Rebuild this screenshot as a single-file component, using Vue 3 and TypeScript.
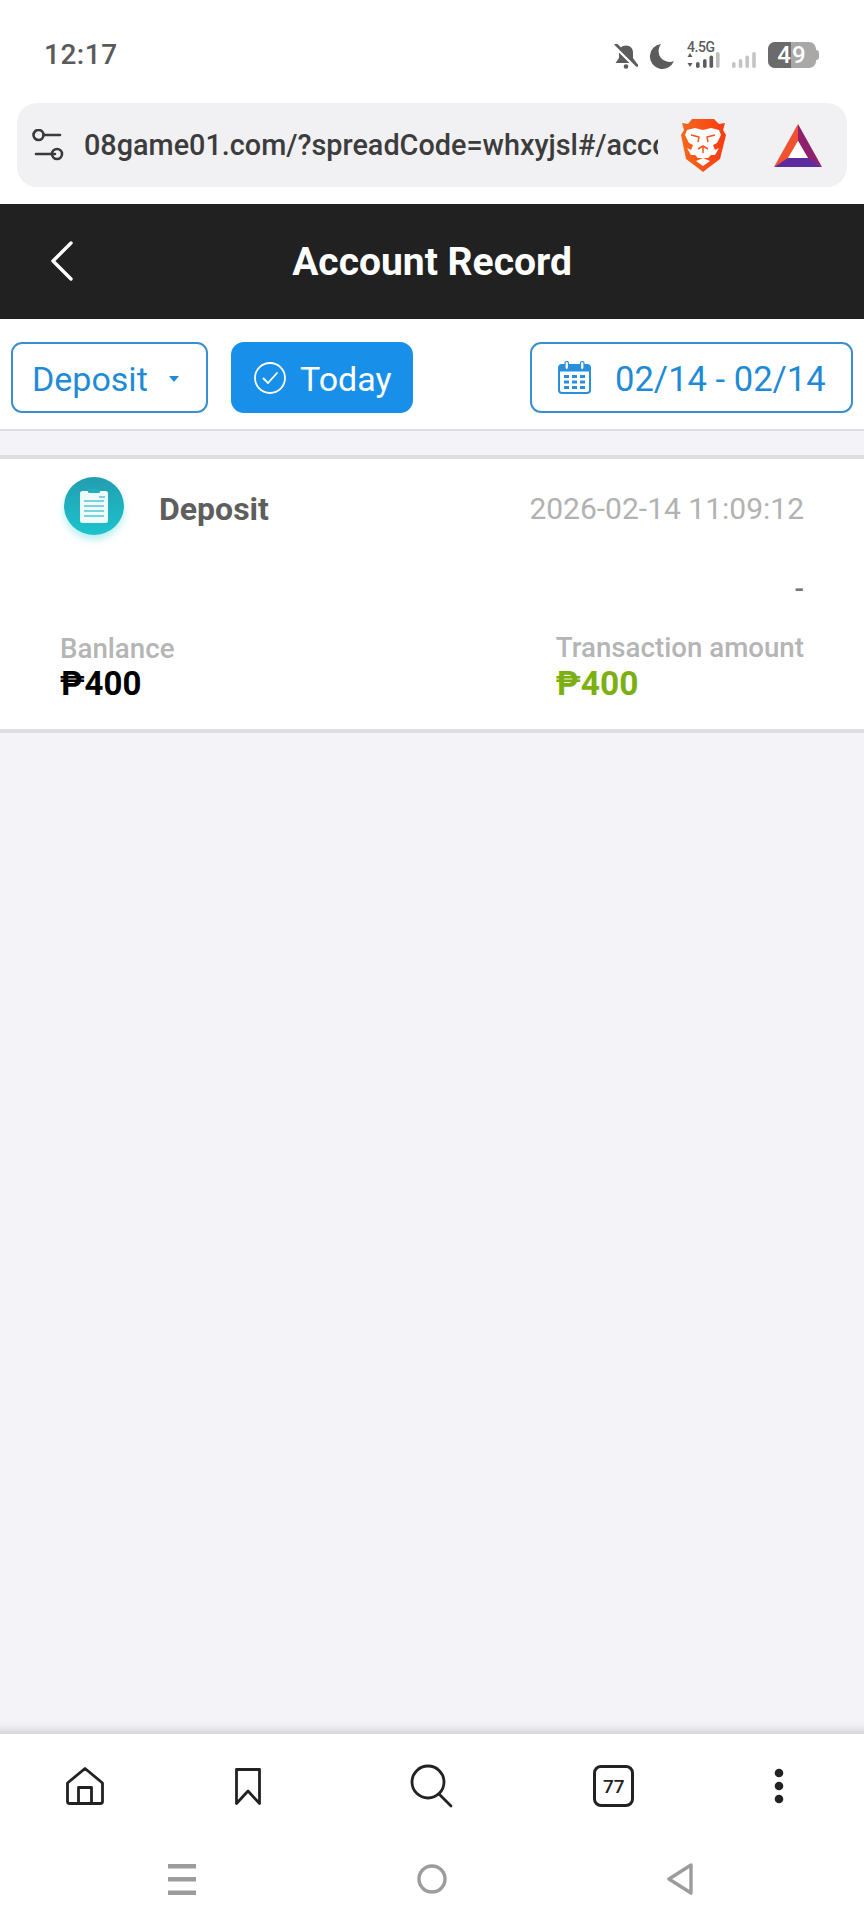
<script setup lang="ts">
const url: string = '08game01.com/?spreadCode=whxyjsl#/account'
</script>

<template>
  <div class="page">
    <div class="status">
      <span class="time">12:17</span>
      <div class="status-icons">
        <svg class="bell" width="24" height="25" viewBox="0 0 24 25">
          <path d="M12 1.500c-4.500 0-7 3-7 7v5.500L1.500 19h21L19 14V8.500c0-4-2.500-7-7-7z" fill="#5c5c5c" />
          <circle cx="12" cy="22.500" r="2.300" fill="#5c5c5c" />
          <path d="M2 2.500l20 20" stroke="#fff" stroke-width="4.500" />
          <path d="M2 0.500l21 21" stroke="#5c5c5c" stroke-width="2.800" stroke-linecap="round" />
        </svg>
        <svg class="moon" width="25" height="25" viewBox="0 0 25 25">
          <path d="M12 0A12.500 12.500 0 1 0 25 17 A11 11 0 0 1 12 0z" fill="#5c5c5c" />
        </svg>
        <div class="net">
          <span class="net-label">4.5G</span>
          <svg width="33" height="16" viewBox="0 0 33 16">
            <path d="M3 1L0.500 5h5zM3 15L0.500 11h5z" fill="#5c5c5c" />
            <rect x="9" y="10" width="3.600" height="6" rx="1.800" fill="#5c5c5c" />
            <rect x="16" y="7" width="3.600" height="9" rx="1.800" fill="#5c5c5c" />
            <rect x="22.500" y="3.500" width="3.600" height="12.500" rx="1.800" fill="#5c5c5c" />
            <rect x="29" y="0" width="3.600" height="16" rx="1.800" fill="#bdbdbd" />
          </svg>
        </div>
        <svg class="signal" width="24" height="16" viewBox="0 0 24 16">
          <rect x="0" y="10" width="3.600" height="6" rx="1.800" fill="#c4c4c4" />
          <rect x="6.700" y="7" width="3.600" height="9" rx="1.800" fill="#c4c4c4" />
          <rect x="13.400" y="3.500" width="3.600" height="12.500" rx="1.800" fill="#c4c4c4" />
          <rect x="20.200" y="0" width="3.600" height="16" rx="1.800" fill="#c4c4c4" />
        </svg>
        <div class="battery">
          <span class="battery-fill"></span>
          <span class="battery-num">49</span>
          <span class="battery-tip"></span>
        </div>
      </div>
    </div>

    <div class="urlbar">
      <svg class="sliders" width="32" height="32" viewBox="0 0 32 32" fill="none" stroke="#3a3a3a" stroke-width="2.600">
        <circle cx="6.500" cy="6" r="5" />
        <path d="M11.500 6H28M4 25h19" stroke-linecap="round" />
        <circle cx="25" cy="25" r="5" />
      </svg>
      <span class="url">{{ url }}</span>
      <svg class="brave" width="46" height="54" viewBox="0 0 46 54">
        <defs>
          <linearGradient id="braveGrad" x1="0" y1="0" x2="1" y2="0">
            <stop offset="0" stop-color="#f26a1c" />
            <stop offset="1" stop-color="#fb3a13" />
          </linearGradient>
        </defs>
        <path d="M12 1h22l5 5 6-1-2 7 3 5-6 24-12 9-5 4-5-4-12-9L1 17l3-5-2-7 6 1z" fill="url(#braveGrad)" />
        <path d="M7 12l8-2 8 2 8-2 8 2 2 5-4 8-4 2 2 5 4-2-4 7h-4l-3 3h-10l-3-3h-4l-4-7 4 2 2-5-4-2-4-8z" fill="#fff" />
        <path d="M11 17l8 2-1 5M35 17l-8 2 1 5M18 31l5-3 5 3M23 28v7" fill="none" stroke="#f4531a" stroke-width="1.500" stroke-linejoin="round" />
        <path d="M16 43l7-3 7 3-7 5z" fill="#fff" />
      </svg>
      <svg class="bat" width="48" height="43" viewBox="0 0 48 43">
        <path d="M24 0L0 43l14-8L24 17z" fill="#f0512f" />
        <path d="M24 0l24 43-14-8L24 17z" fill="#90206d" />
        <path d="M0 43h48l-14-9H14z" fill="#5d2b9e" />
        <path d="M24 17l10 17H14z" fill="#fff" />
      </svg>
    </div>

    <header class="topbar">
      <svg class="back" width="24" height="40" viewBox="0 0 24 40" fill="none" stroke="#fff" stroke-width="3.400" stroke-linecap="round" stroke-linejoin="round">
        <path d="M21 2L3 20l18 18" />
      </svg>
      <h1 class="title">Account Record</h1>
    </header>

    <div class="filters">
      <div class="chip chip-type">
        <span>Deposit</span>
        <span class="caret"></span>
      </div>
      <div class="chip chip-today">
        <svg width="32" height="32" viewBox="0 0 32 32" fill="none" stroke="#fff" stroke-width="1.800">
          <circle cx="16" cy="16" r="15" />
          <path d="M9.500 16.500l4.500 4.500 9-10" stroke-linecap="round" stroke-linejoin="round" />
        </svg>
        <span>Today</span>
      </div>
      <div class="chip chip-date">
        <svg width="33" height="33" viewBox="0 0 33 33">
          <rect x="1" y="4" width="31" height="28" rx="3" fill="none" stroke="#2a8fdb" stroke-width="2" />
          <path d="M1 10V7a3 3 0 0 1 3-3h25a3 3 0 0 1 3 3v3z" fill="#2a8fdb" stroke="#2a8fdb" stroke-width="1" />
          <rect x="7" y="0.500" width="3.500" height="8" rx="1.700" fill="#fff" stroke="#2a8fdb" stroke-width="1.200" />
          <rect x="22.500" y="0.500" width="3.500" height="8" rx="1.700" fill="#fff" stroke="#2a8fdb" stroke-width="1.200" />
          <g fill="#2a8fdb">
            <rect x="6" y="14" width="5" height="3" />
            <rect x="14" y="14" width="5" height="3" />
            <rect x="22" y="14" width="5" height="3" />
            <rect x="6" y="19.500" width="5" height="3" />
            <rect x="14" y="19.500" width="5" height="3" />
            <rect x="22" y="19.500" width="5" height="3" />
            <rect x="6" y="25" width="5" height="3" />
            <rect x="14" y="25" width="5" height="3" />
            <rect x="22" y="25" width="5" height="3" />
          </g>
        </svg>
        <span>02/14 - 02/14</span>
      </div>
    </div>

    <main class="content">
      <section class="card">
        <div class="card-head">
          <div class="coin">
            <svg width="28" height="34" viewBox="0 0 28 34">
              <rect x="0" y="2" width="28" height="32" rx="2.500" fill="#eefbfb" />
              <rect x="8" y="0" width="12" height="4" rx="1.500" fill="#1fb0bd" />
              <rect x="19" y="7" width="6" height="2" fill="#7dd3d8" />
              <g fill="#7dd3d8">
                <rect x="4" y="11" width="20" height="2" />
                <rect x="4" y="16" width="20" height="2" />
                <rect x="4" y="21" width="20" height="2" />
                <rect x="4" y="26" width="20" height="2" />
              </g>
            </svg>
          </div>
          <span class="card-name">Deposit</span>
          <span class="card-time">2026-02-14 11:09:12</span>
        </div>
        <div class="card-dash">-</div>
        <div class="card-foot">
          <div class="col">
            <span class="label label-left">Banlance</span>
            <span class="amount">₱400</span>
          </div>
          <div class="col">
            <span class="label">Transaction amount</span>
            <span class="amount green">₱400</span>
          </div>
        </div>
      </section>
    </main>

    <nav class="toolbar">
      <svg width="38" height="38" viewBox="0 0 38 38" fill="none" stroke="#222" stroke-width="2.800" stroke-linejoin="round">
        <path d="M19 1.500L1.500 16v18.500a2 2 0 0 0 2 2h31a2 2 0 0 0 2-2V16z" />
        <path d="M12.500 36.500V20.500h13v16" />
      </svg>
      <svg class="bookmark" width="26" height="37" viewBox="0 0 26 37" fill="none" stroke="#222" stroke-width="2.800" stroke-linejoin="round">
        <path d="M1.500 1.500h23v34L13 23 1.500 35.500z" />
      </svg>
      <svg width="44" height="44" viewBox="0 0 44 44" fill="none" stroke="#222" stroke-width="2.800" stroke-linecap="round">
        <circle cx="18" cy="18" r="16" />
        <path d="M29 30l12 12" />
      </svg>
      <div class="tabs">77</div>
      <svg width="10" height="36" viewBox="0 0 10 36" fill="#222">
        <circle cx="5" cy="5" r="4.300" />
        <circle cx="5" cy="18" r="4.300" />
        <circle cx="5" cy="31" r="4.300" />
      </svg>
    </nav>

    <div class="sysnav">
      <svg width="28" height="31" viewBox="0 0 28 31" fill="#9c9c9c">
        <rect x="0" y="0" width="28" height="4.500" />
        <rect x="0" y="13" width="28" height="4.500" />
        <rect x="0" y="26.500" width="28" height="4.500" />
      </svg>
      <svg width="30" height="30" viewBox="0 0 30 30" fill="none" stroke="#9c9c9c" stroke-width="3.400">
        <circle cx="15" cy="15" r="13" />
      </svg>
      <svg width="26" height="32" viewBox="0 0 26 32" fill="none" stroke="#9c9c9c" stroke-width="3.400" stroke-linejoin="round">
        <path d="M24 2L2 16l22 14z" />
      </svg>
    </div>
  </div>
</template>

<style>
html, body { margin: 0; background: #fff; }
</style>

<style scoped>
.page {
  width: 864px;
  height: 1920px;
  display: flex;
  flex-direction: column;
  background: #fff;
  font-family: Roboto, "Liberation Sans", sans-serif;
  overflow: hidden;
}
.status {
  height: 103px;
  flex: none;
  box-sizing: border-box;
  padding: 36px 48px 0 44px;
  display: flex;
  justify-content: space-between;
  align-items: flex-start;
}
.time {
  font-size: 28px;
  line-height: 38px;
  font-weight: 500;
  color: #5a5a5a;
  letter-spacing: 0.5px;
}
.status-icons {
  display: flex;
  align-items: flex-start;
  margin-top: 6px;
}
.bell { margin-top: 2px; }
.moon { margin: 2px 0 0 11px; }
.net {
  width: 33px;
  margin-left: 13px;
  display: flex;
  flex-direction: column;
}
.net-label {
  font-size: 14px;
  line-height: 11px;
  font-weight: 500;
  color: #5c5c5c;
  height: 10px;
  letter-spacing: -0.4px;
}
.signal { margin: 10px 0 0 12px; }
.battery {
  position: relative;
  width: 48px;
  height: 26px;
  margin-left: 12px;
  background: #a8a8a8;
  border-radius: 7px;
  overflow: visible;
  text-align: center;
}
.battery-fill {
  position: absolute;
  left: 0;
  top: 0;
  bottom: 0;
  width: 23px;
  background: #6b6b6b;
  border-radius: 7px 0 0 7px;
}
.battery-num {
  position: relative;
  font-size: 24px;
  line-height: 26px;
  font-weight: 500;
  color: #fff;
  letter-spacing: 1px;
}
.battery-tip {
  position: absolute;
  right: -3px;
  top: 8px;
  width: 3px;
  height: 10px;
  background: #a8a8a8;
  border-radius: 0 3px 3px 0;
}
.urlbar {
  height: 84px;
  flex: none;
  margin: 0 17px;
  box-sizing: border-box;
  background: #f1f0f2;
  border-radius: 20px;
  display: flex;
  align-items: center;
  padding-left: 15px;
}
.sliders { flex: none; }
.url {
  width: 574px;
  flex: none;
  margin-left: 20px;
  overflow: hidden;
  white-space: nowrap;
  font-size: 28.800px;
  font-weight: 500;
  color: #3c3c3c;
}
.brave { flex: none; margin-left: 22px; }
.bat { flex: none; margin-left: 48px; }
.topbar {
  height: 115px;
  flex: none;
  margin-top: 17px;
  background: #212121;
  display: flex;
  align-items: center;
  justify-content: center;
  position: relative;
}
.back {
  position: absolute;
  left: 50px;
  top: 37px;
}
.title {
  margin: 0;
  font-size: 39px;
  font-weight: 700;
  color: #fff;
}
.filters {
  height: 112px;
  flex: none;
  box-sizing: border-box;
  border-bottom: 2px solid #dfdfe2;
  padding: 23px 11px 0 11px;
  display: flex;
  align-items: flex-start;
  gap: 23px;
  background: #fff;
}
.chip {
  height: 71px;
  box-sizing: border-box;
  border: 2px solid #3a90cf;
  border-radius: 11px;
  display: flex;
  align-items: center;
  font-size: 34px;
  color: #1f8bd6;
}
.chip span:not(.caret) { padding-top: 2px; }
.chip-type {
  width: 197px;
  padding-left: 19px;
}
.caret {
  width: 0;
  height: 0;
  margin-left: 21px;
  margin-top: 2px;
  border-left: 5.500px solid transparent;
  border-right: 5.500px solid transparent;
  border-top: 6px solid #1f8bd6;
}
.chip-today {
  width: 182px;
  padding-left: 21px;
  gap: 14px;
  background: #1890ea;
  border-color: #1890ea;
  color: #fff;
  border-radius: 13px;
}
.chip-date {
  width: 323px;
  margin-left: auto;
  padding-left: 26px;
  gap: 24px;
  font-size: 34.600px;
}
.content {
  flex: 1;
  min-height: 0;
  padding-top: 24px;
  background: linear-gradient(to top, #d6d6da 0, #eeeef3 8px, #f3f3f8 14px);
}
.card {
  height: 278px;
  box-sizing: border-box;
  background: #fff;
  border-top: 4px solid #dedee0;
  border-bottom: 4px solid #dedee0;
  padding: 0 60px;
  display: flex;
  flex-direction: column;
}
.card-head {
  display: flex;
  align-items: center;
  height: 93px;
}
.coin {
  flex: none;
  width: 60px;
  height: 58px;
  margin: 0 0 0 4px;
  border-radius: 50%;
  background: linear-gradient(180deg, #229db0 0%, #1cc4cc 100%);
  box-shadow: 0 5px 7px rgba(60, 210, 215, 0.35);
  display: flex;
  align-items: center;
  justify-content: center;
}
.card-name {
  margin-left: 35px;
  margin-top: 6px;
  font-size: 32px;
  font-weight: 700;
  color: #5e5e5e;
}
.card-time {
  margin-left: auto;
  margin-top: 6px;
  font-size: 30px;
  color: #b2b2b2;
}
.card-dash {
  margin-top: 15px;
  text-align: right;
  font-size: 28px;
  line-height: 44px;
  font-weight: 500;
  color: #777;
}
.card-foot {
  margin-top: 19px;
  display: flex;
  justify-content: space-between;
}
.col {
  display: flex;
  flex-direction: column;
}
.label {
  font-size: 27.700px;
  line-height: 36px;
  font-weight: 500;
  color: #b5b5b5;
}
.label-left { margin-top: 1px; margin-bottom: -1px; }
.amount {
  font-size: 33px;
  line-height: 36px;
  font-weight: 700;
  color: #000;
}
.green { color: #7cb012; font-size: 33.500px; }
.toolbar {
  height: 104px;
  flex: none;
  padding: 0 80px 0 66px;
  display: flex;
  align-items: center;
  justify-content: space-between;
  background: #fff;
}
.bookmark { margin: 0 9px 0 -9px; }
.tabs {
  width: 41px;
  height: 42px;
  box-sizing: border-box;
  border: 3px solid #222;
  border-radius: 8px;
  display: flex;
  align-items: center;
  justify-content: center;
  font-size: 19px;
  font-weight: 500;
  color: #222;
}
.sysnav {
  height: 82px;
  flex: none;
  padding: 0 171px 0 168px;
  display: flex;
  align-items: center;
  justify-content: space-between;
  background: #fff;
}
</style>
